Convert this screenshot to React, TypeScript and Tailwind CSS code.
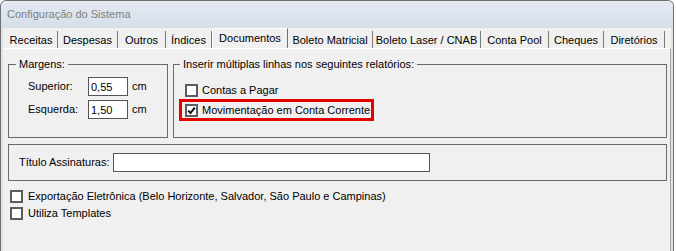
import React from "react"

const tabs = [
  { label: "Receitas", w: "w-[53px]" },
  { label: "Despesas", w: "w-[60px]" },
  { label: "Outros", w: "w-[48px]" },
  { label: "Índices", w: "w-[46px]" },
  { label: "Documentos", w: "w-[76px]", active: true },
  { label: "Boleto Matricial", w: "w-[85px]" },
  { label: "Boleto Laser / CNAB", w: "w-[108px]" },
  { label: "Conta Pool", w: "w-[68px]" },
  { label: "Cheques", w: "w-[55px]" },
  { label: "Diretórios", w: "w-[61px]" },
]

const CheckBox: React.FC<{ checked?: boolean }> = ({ checked }) => (
  <span className="w-[13px] h-[13px] shrink-0 border-2 border-[#5c5c5c] bg-white flex items-center justify-center">
    {checked && (
      <svg width="9" height="9" viewBox="0 0 9 9">
        <path d="M1.2 4.6 L3.5 7 L7.8 1.6" fill="none" stroke="#000" strokeWidth="1.9" />
      </svg>
    )}
  </span>
)

const App: React.FC = () => {
  return (
    <div className="w-[676px] h-[251px] bg-white overflow-hidden font-['Liberation_Sans',Arial,sans-serif] text-[11px] text-black">
      <div className="h-full w-[674px] rounded-t-[6px] border border-b-0 border-[#6f6f6f] bg-[#dbe3ec] flex flex-col overflow-hidden">
        {/* Title bar */}
        <div className="h-[27px] shrink-0 flex items-center pl-[6px] text-[#7f7f7f] bg-gradient-to-b from-[#e4eaf2] to-[#d5dfea]">
          Configuração do Sistema
        </div>

        <div className="flex-1 ml-[2px] mr-[2px] bg-[#f0f0f0] flex flex-col">
          {/* Tabs */}
          <div className="h-[20px] shrink-0 flex items-end pl-[2px]">
            {tabs.map((t) =>
              t.active ? (
                <div
                  key={t.label}
                  className={`${t.w} h-[20px] flex items-center justify-center border-t border-l border-r border-t-white border-l-white border-r-[#707070] pb-[1px]`}
                >
                  {t.label}
                </div>
              ) : (
                <div
                  key={t.label}
                  className={`${t.w} h-[17px] flex items-center justify-center border-r border-[#7a7a7a] pt-[1px]`}
                >
                  {t.label}
                </div>
              ),
            )}
          </div>

          {/* Panel */}
          <div className="flex-1 border-t border-r border-t-white border-r-[#a0a0a0] pl-[5px] pt-[9px]">
            <div className="flex gap-[5px]">
              <fieldset className="w-[160px] h-[80px] border border-[#6a6a6a]">
                <legend className="ml-[7px] px-[3px] leading-[13px]">Margens:</legend>
                <div className="mt-[6px] pl-[19px] flex flex-col gap-[4px]">
                  <div className="flex items-center">
                    <span className="w-[60px]">Superior:</span>
                    <input
                      readOnly
                      value="0,55"
                      className="w-[40px] h-[19px] border border-[#555] bg-white pl-[2px] outline-none"
                    />
                    <span className="ml-[4px]">cm</span>
                  </div>
                  <div className="flex items-center">
                    <span className="w-[60px]">Esquerda:</span>
                    <input
                      readOnly
                      value="1,50"
                      className="w-[40px] h-[19px] border border-[#555] bg-white pl-[2px] outline-none"
                    />
                    <span className="ml-[4px]">cm</span>
                  </div>
                </div>
              </fieldset>

              <fieldset className="w-[494px] h-[80px] border border-[#6a6a6a]">
                <legend className="ml-[6px] px-[3px] leading-[13px]">
                  Inserir múltiplas linhas nos seguintes relatórios:
                </legend>
                <div className="mt-[13px] ml-[11px] h-[13px] flex items-center gap-[4px]">
                  <CheckBox />
                  <span>Contas a Pagar</span>
                </div>
                <div className="mt-[2px] ml-[5px] w-[195px] h-[22px] border-3 border-[#e60000] pl-[3px] flex items-center gap-[4px]">
                  <CheckBox checked />
                  <span>Movimentação em Conta Corrente</span>
                </div>
              </fieldset>
            </div>

            <div className="mt-[6px] w-[659px] h-[37px] border border-[#6a6a6a] pl-[10px] flex items-center">
              <span className="w-[94px]">Título Assinaturas:</span>
              <input readOnly value="" className="w-[317px] h-[19px] border border-[#555] bg-white outline-none" />
            </div>

            <div className="mt-[9px] ml-[2px] flex flex-col gap-[4px]">
              <div className="h-[13px] flex items-center gap-[5px]">
                <CheckBox />
                <span>Exportação Eletrônica (Belo Horizonte, Salvador, São Paulo e Campinas)</span>
              </div>
              <div className="h-[13px] flex items-center gap-[5px]">
                <CheckBox />
                <span>Utiliza Templates</span>
              </div>
            </div>
          </div>
        </div>
      </div>
    </div>
  )
}

export default App
